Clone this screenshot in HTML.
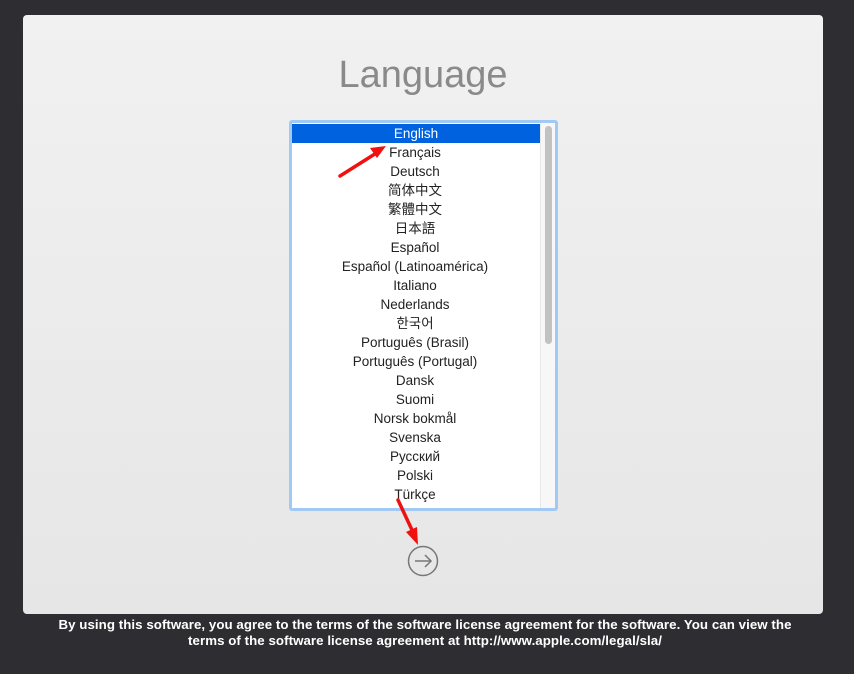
<!DOCTYPE html>
<html><head><meta charset="utf-8"><style>
body{margin:0;width:854px;height:674px;background:#2e2e32;font-family:"Liberation Sans","Noto Sans CJK SC",sans-serif;position:relative;overflow:hidden}
.panel{position:absolute;left:23px;top:15px;width:800px;height:599px;background:linear-gradient(#f1f1f1,#e6e6e6);border-radius:4px}
h1{position:absolute;left:0;width:846px;top:54px;margin:0;text-align:center;font-weight:normal;font-size:38px;color:#8a8a8a}
.box{position:absolute;left:289px;top:120px;width:263px;height:385px;border:3px solid #a2c8f4;border-radius:3px;background:#fff;overflow:hidden}
.row{height:19px;line-height:19px;text-align:center;font-size:13.5px;color:#222;width:246px}
.sel{background:#0062df;color:#fff;margin-top:1px;width:248px}
.sb{position:absolute;left:248px;top:0;width:15px;height:385px;background:#f7f7f7;border-left:1px solid #e8e8e8}
.th{position:absolute;left:4px;top:3px;width:7px;height:218px;background:#c2c2c2;border-radius:4px}
.foot{position:absolute;left:0;width:850px;top:617px;text-align:center;color:#fff;font-weight:bold;font-size:13.3px;line-height:16px;letter-spacing:0.05px}
</style></head><body>
<div class="panel"></div>
<h1>Language</h1>
<div class="box">
<div class="row sel">English</div><div class="row">Français</div><div class="row">Deutsch</div><div class="row">简体中文</div><div class="row">繁體中文</div><div class="row">日本語</div><div class="row">Español</div><div class="row">Español (Latinoamérica)</div><div class="row">Italiano</div><div class="row">Nederlands</div><div class="row">한국어</div><div class="row">Português (Brasil)</div><div class="row">Português (Portugal)</div><div class="row">Dansk</div><div class="row">Suomi</div><div class="row">Norsk bokmål</div><div class="row">Svenska</div><div class="row">Русский</div><div class="row">Polski</div><div class="row">Türkçe</div>
<div class="sb"><div class="th"></div></div>
</div>
<svg style="position:absolute;left:0;top:0" width="854" height="674">
<circle cx="423" cy="561" r="14.5" fill="none" stroke="#777" stroke-width="1.5"/>
<path d="M415 561H431M425 555L431 561L425 567" fill="none" stroke="#777" stroke-width="1.5"/>
<path d="M340 176L378 152" stroke="#f01010" stroke-width="3.5" stroke-linecap="round"/>
<path d="M386 146L370 148L377 158Z" fill="#f01010"/>
<path d="M398 500L412 530" stroke="#f01010" stroke-width="3.5" stroke-linecap="round"/>
<path d="M418 545L406 532L417 527Z" fill="#f01010"/>
</svg>
<div class="foot">By using this software, you agree to the terms of the software license agreement for the software. You can view the<br>terms of the software license agreement at http://www.apple.com/legal/sla/</div>
</body></html>
